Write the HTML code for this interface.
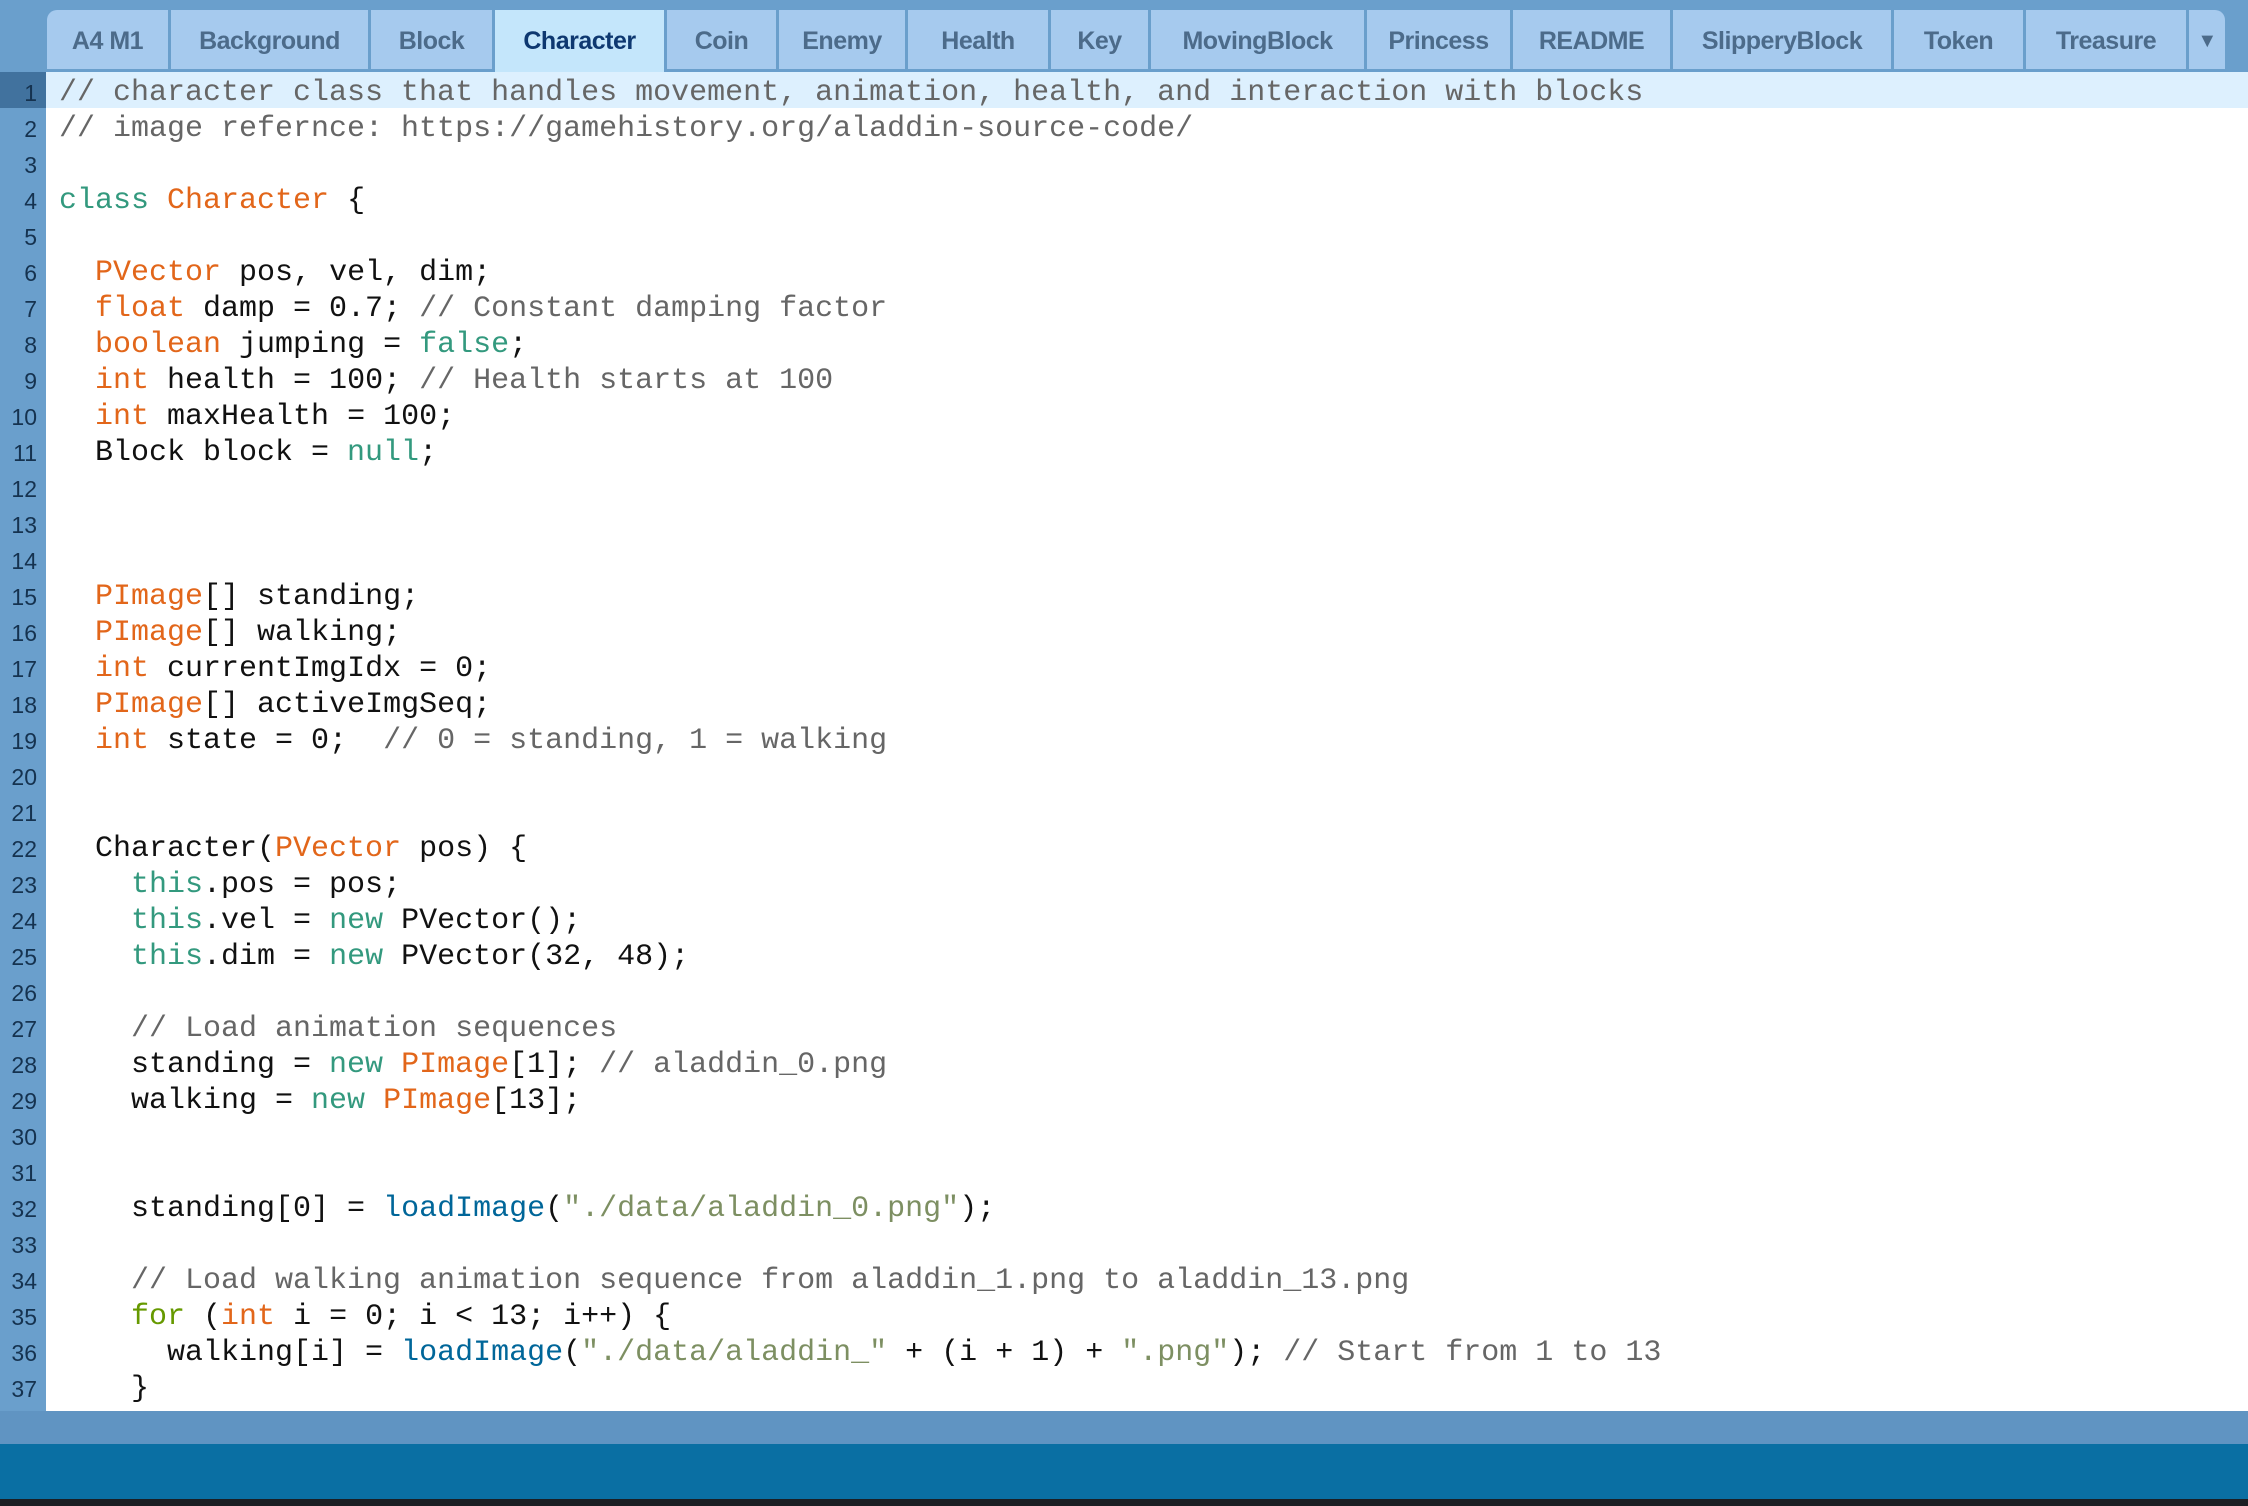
<!DOCTYPE html>
<html><head><meta charset="utf-8"><style>
html,body{margin:0;padding:0}
body{width:2248px;height:1506px;position:relative;overflow:hidden;background:#fff;font-family:"Liberation Sans",sans-serif}
#top{position:absolute;left:0;top:0;width:2248px;height:72px;background:#6a9fcc}
.tab{position:absolute;top:10px;height:59px;background:#a6caee;color:#4c6b8a;font-weight:bold;font-size:25px;line-height:62px;text-align:center;letter-spacing:-0.5px}
.tab.act{background:#c4e6fb;color:#0e3870;height:62px}
#gut{position:absolute;left:0;top:72px;width:46px;height:1339px;background:#6a9fcc}
#code{position:absolute;left:46px;top:72px;width:2202px;height:1339px;background:#fff}
.hl{position:absolute;left:46px;top:72px;width:2202px;height:36px;background:#ddf0fe}
.hg{position:absolute;left:0;top:72px;width:46px;height:36px;background:#41729e}
.ln{position:absolute;left:0;width:37px;text-align:right;font-size:23px;color:#15324f;line-height:36px;margin-top:3px}
.l{position:absolute;left:59px;font-family:"Liberation Mono",monospace;font-size:30px;line-height:36px;white-space:pre;color:#111;margin-top:3px}
.c{color:#666}.k{color:#e2661a}.t{color:#33997e}.f{color:#006699}.s{color:#7d8f62}.g{color:#669900}
#band{position:absolute;left:0;top:1411px;width:2248px;height:33px;background:#6094c2}
#foot{position:absolute;left:0;top:1444px;width:2248px;height:55px;background:#0a6fa3}
#blk{position:absolute;left:0;top:1499px;width:2248px;height:7px;background:#1b1f24}
</style></head><body>
<div id="top"></div>
<div class="tab" style="left:47px;width:121px;border-top-left-radius:10px">A4 M1</div>
<div class="tab" style="left:171px;width:197px">Background</div>
<div class="tab" style="left:371px;width:121px">Block</div>
<div class="tab act" style="left:495px;width:169px">Character</div>
<div class="tab" style="left:667px;width:109px">Coin</div>
<div class="tab" style="left:779px;width:126px">Enemy</div>
<div class="tab" style="left:908px;width:140px">Health</div>
<div class="tab" style="left:1051px;width:97px">Key</div>
<div class="tab" style="left:1151px;width:213px">MovingBlock</div>
<div class="tab" style="left:1367px;width:143px">Princess</div>
<div class="tab" style="left:1513px;width:157px">README</div>
<div class="tab" style="left:1673px;width:218px">SlipperyBlock</div>
<div class="tab" style="left:1894px;width:129px">Token</div>
<div class="tab" style="left:2026px;width:160px">Treasure</div>
<div class="tab" style="left:2189px;width:36px;border-top-right-radius:10px;font-size:20px">▼</div>
<div id="gut"></div><div id="code"></div>
<div class="hl"></div><div class="hg"></div>
<div class="ln" style="top:72px">1</div><div class="ln" style="top:108px">2</div><div class="ln" style="top:144px">3</div><div class="ln" style="top:180px">4</div><div class="ln" style="top:216px">5</div><div class="ln" style="top:252px">6</div><div class="ln" style="top:288px">7</div><div class="ln" style="top:324px">8</div><div class="ln" style="top:360px">9</div><div class="ln" style="top:396px">10</div><div class="ln" style="top:432px">11</div><div class="ln" style="top:468px">12</div><div class="ln" style="top:504px">13</div><div class="ln" style="top:540px">14</div><div class="ln" style="top:576px">15</div><div class="ln" style="top:612px">16</div><div class="ln" style="top:648px">17</div><div class="ln" style="top:684px">18</div><div class="ln" style="top:720px">19</div><div class="ln" style="top:756px">20</div><div class="ln" style="top:792px">21</div><div class="ln" style="top:828px">22</div><div class="ln" style="top:864px">23</div><div class="ln" style="top:900px">24</div><div class="ln" style="top:936px">25</div><div class="ln" style="top:972px">26</div><div class="ln" style="top:1008px">27</div><div class="ln" style="top:1044px">28</div><div class="ln" style="top:1080px">29</div><div class="ln" style="top:1116px">30</div><div class="ln" style="top:1152px">31</div><div class="ln" style="top:1188px">32</div><div class="ln" style="top:1224px">33</div><div class="ln" style="top:1260px">34</div><div class="ln" style="top:1296px">35</div><div class="ln" style="top:1332px">36</div><div class="ln" style="top:1368px">37</div>
<div class="l c" style="top:72px">// character class that handles movement, animation, health, and interaction with blocks</div>
<div class="l c" style="top:108px">// image refernce: https://gamehistory.org/aladdin-source-code/</div>
<div class="l" style="top:180px"><span class="t">class</span> <span class="k">Character</span> {</div>
<div class="l" style="top:252px">  <span class="k">PVector</span> pos, vel, dim;</div>
<div class="l" style="top:288px">  <span class="k">float</span> damp = 0.7; <span class="c">// Constant damping factor</span></div>
<div class="l" style="top:324px">  <span class="k">boolean</span> jumping = <span class="t">false</span>;</div>
<div class="l" style="top:360px">  <span class="k">int</span> health = 100; <span class="c">// Health starts at 100</span></div>
<div class="l" style="top:396px">  <span class="k">int</span> maxHealth = 100;</div>
<div class="l" style="top:432px">  Block block = <span class="t">null</span>;</div>
<div class="l" style="top:576px">  <span class="k">PImage</span>[] standing;</div>
<div class="l" style="top:612px">  <span class="k">PImage</span>[] walking;</div>
<div class="l" style="top:648px">  <span class="k">int</span> currentImgIdx = 0;</div>
<div class="l" style="top:684px">  <span class="k">PImage</span>[] activeImgSeq;</div>
<div class="l" style="top:720px">  <span class="k">int</span> state = 0;  <span class="c">// 0 = standing, 1 = walking</span></div>
<div class="l" style="top:828px">  Character(<span class="k">PVector</span> pos) {</div>
<div class="l" style="top:864px">    <span class="t">this</span>.pos = pos;</div>
<div class="l" style="top:900px">    <span class="t">this</span>.vel = <span class="t">new</span> PVector();</div>
<div class="l" style="top:936px">    <span class="t">this</span>.dim = <span class="t">new</span> PVector(32, 48);</div>
<div class="l c" style="top:1008px">    // Load animation sequences</div>
<div class="l" style="top:1044px">    standing = <span class="t">new</span> <span class="k">PImage</span>[1]; <span class="c">// aladdin_0.png</span></div>
<div class="l" style="top:1080px">    walking = <span class="t">new</span> <span class="k">PImage</span>[13];</div>
<div class="l" style="top:1188px">    standing[0] = <span class="f">loadImage</span>(<span class="s">"./data/aladdin_0.png"</span>);</div>
<div class="l c" style="top:1260px">    // Load walking animation sequence from aladdin_1.png to aladdin_13.png</div>
<div class="l" style="top:1296px">    <span class="g">for</span> (<span class="k">int</span> i = 0; i &lt; 13; i++) {</div>
<div class="l" style="top:1332px">      walking[i] = <span class="f">loadImage</span>(<span class="s">"./data/aladdin_"</span> + (i + 1) + <span class="s">".png"</span>); <span class="c">// Start from 1 to 13</span></div>
<div class="l" style="top:1368px">    }</div>
<div id="band"></div><div id="foot"></div><div id="blk"></div>
</body></html>
